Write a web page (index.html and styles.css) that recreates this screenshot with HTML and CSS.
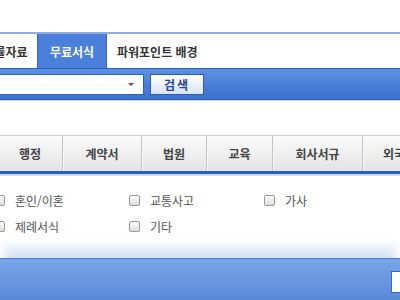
FILE: index.html
```html
<!DOCTYPE html>
<html lang="ko">
<head>
    <meta charset="UTF-8">
    <title>무료서식</title>
    <link rel="stylesheet" href="styles.css">
</head>
<body>

<div class="page">
    <div class="top-space"></div>

    <ul class="tabs">
        <li class="tab first">법률자료</li>
        <li class="tab active">무료서식</li>
        <li class="tab wide">파워포인트 배경</li>
    </ul>

    <div class="search-bar">
        <div class="select-box"><span class="arrow"></span></div>
        <button class="search-btn">검색</button>
    </div>

    <ul class="cats">
        <li class="cat first">행정</li>
        <li class="cat w79">계약서</li>
        <li class="cat w65">법원</li>
        <li class="cat w66">교육</li>
        <li class="cat w90">회사서규</li>
        <li class="cat last">외국어서식</li>
    </ul>

    <div class="checks">
        <label class="check"><span class="box"></span>혼인/이혼</label>
        <label class="check"><span class="box"></span>교통사고</label>
        <label class="check"><span class="box"></span>가사</label>
        <label class="check"><span class="box"></span>제례서식</label>
        <label class="check"><span class="box"></span>기타</label>
    </div>

    <div class="footer">
        <div class="footer-box"></div>
    </div>
</div>

</body>
</html>
```

FILE: styles.css
```css
body {
    margin: 0;
    background: #fff;
    font-family: "Noto Sans CJK KR", "Noto Sans", sans-serif;
    font-size: 12px;
    overflow: hidden;
}
.page {
    width: 400px;
    height: 300px;
    overflow: hidden;
}
.top-space {
    height: 32px;
}
ul {
    list-style: none;
    margin: 0;
    padding: 0;
}

/* top tabs */
.tabs {
    display: flex;
    height: 34px;
    border-top: 2px solid #8eaee6;
}
.tab {
    display: flex;
    align-items: center;
    justify-content: center;
    flex-shrink: 0;
    box-sizing: border-box;
    color: #333;
    font-weight: bold;
    background: #fff;
    border-right: 1px solid #3b68c4;
    white-space: nowrap;
}
.tab.first {
    width: 64px;
    margin-left: -26px;
}
.tab.active {
    width: 69px;
    background: #4a7fdb;
    color: #fff;
}
.tab.wide {
    flex: 1;
    justify-content: flex-start;
    padding-left: 10px;
    border-right: none;
}

/* search bar */
.search-bar {
    display: flex;
    align-items: center;
    gap: 6px;
    height: 30px;
    border-top: 1px solid #2f5fbf;
    border-bottom: 1px solid #2f5fbf;
    background: linear-gradient(#5d8fe2, #3d70d0);
    box-shadow: 0 1px 0 #c4d5f2;
}
.select-box {
    position: relative;
    width: 143px;
    height: 19px;
    background: #fff;
    border: 1px solid #3460b8;
    border-left: none;
}
.arrow {
    position: absolute;
    right: 9px;
    top: 8px;
    border-left: 3px solid transparent;
    border-right: 3px solid transparent;
    border-top: 3px solid #555;
}
.search-btn {
    width: 54px;
    height: 21px;
    padding: 0;
    border: 1px solid #2e5cb5;
    background: linear-gradient(#ffffff, #d8e3f4);
    color: #24489a;
    font-family: inherit;
    font-size: 12px;
    font-weight: bold;
    letter-spacing: 2px;
}

/* category tabs */
.cats {
    display: flex;
    margin-top: 35px;
    height: 35px;
    border-top: 1px solid #cfcfcf;
    border-bottom: 3px solid #2c5dc0;
    box-shadow: 0 2px 0 #cfdcf2;
    background: linear-gradient(#fbfbfb, #e4e4e4);
}
.cat {
    display: flex;
    align-items: center;
    justify-content: center;
    flex-shrink: 0;
    box-sizing: border-box;
    color: #444;
    font-weight: bold;
    border-right: 1px solid #c4c4c4;
    box-shadow: 1px 0 0 #f6f6f6;
    white-space: nowrap;
}
.cat.first {
    width: 65px;
    margin-left: -2px;
}
.cat.w79 { width: 79px; }
.cat.w65 { width: 65px; }
.cat.w66 { width: 66px; }
.cat.w90 { width: 90px; }
.cat.last {
    justify-content: flex-start;
    padding: 0 20px;
}

/* checkboxes */
.checks {
    display: grid;
    grid-template-columns: repeat(3, 135px);
    row-gap: 8px;
    margin-top: 17px;
    margin-left: -6px;
}
.check {
    display: flex;
    align-items: center;
    height: 18px;
    color: #555;
    white-space: nowrap;
}
.box {
    width: 9px;
    height: 9px;
    margin-right: 10px;
    border: 1px solid #9a9a9a;
    border-radius: 2px;
    background: linear-gradient(#ffffff, #dcdcdc);
}

/* footer */
.footer {
    display: flex;
    justify-content: flex-end;
    align-items: center;
    margin-top: 23px;
    height: 42px;
    border-top: 1px solid #4a78cc;
    background: linear-gradient(#7ba5e8, #5a88d8);
    box-shadow: 0 -14px 12px -4px #d4e1f5;
}
.footer-box {
    width: 8px;
    height: 20px;
    margin-right: -1px;
    margin-top: 4px;
    background: #fff;
    border: 1px solid #3a66c0;
}
```
